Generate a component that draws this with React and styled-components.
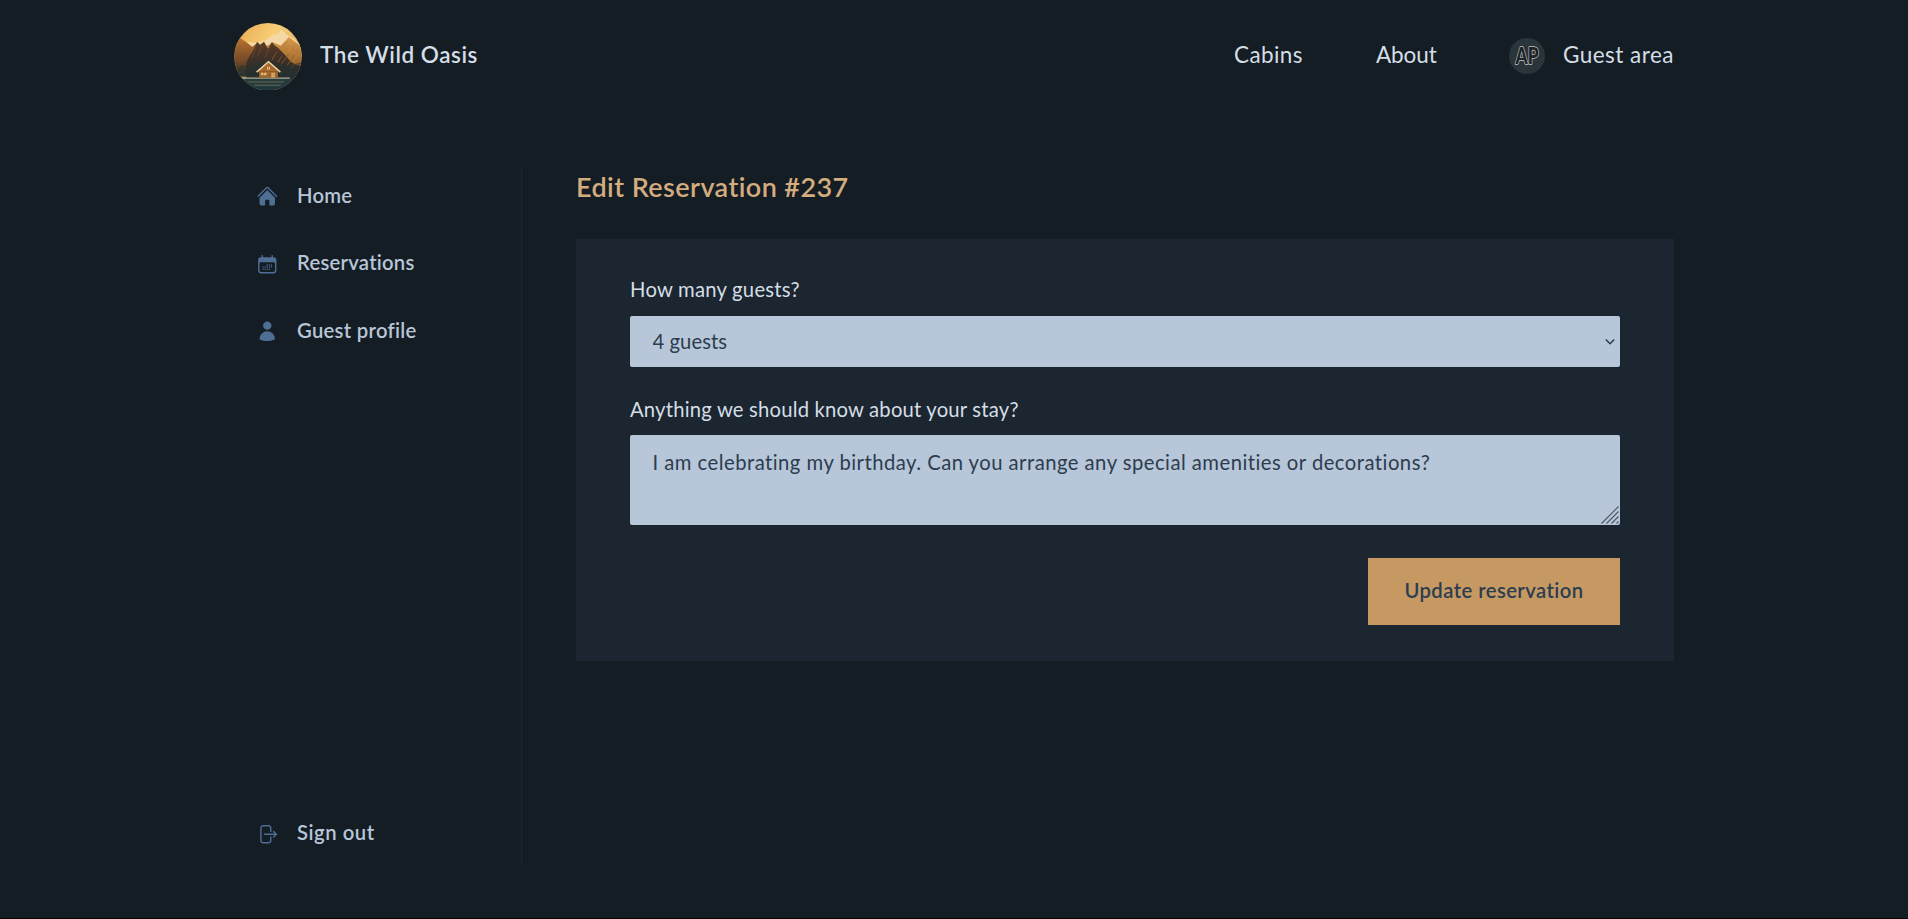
import React from "react";
import styled, { createGlobalStyle } from "styled-components";
import { HiHome, HiCalendarDays, HiUser } from "react-icons/hi2";

const Global = createGlobalStyle`
  *, *::before, *::after { box-sizing: border-box; }
  body {
    margin: 0;
    background: #151d24;
    color: #d4dee7;
    font-family: Lato, "Liberation Sans", sans-serif;
    font-variant-ligatures: none;
    -webkit-font-smoothing: antialiased;
  }
`;

const Page = styled.div`
  height: 919px;
  display: flex;
  flex-direction: column;
  background: #151d24;
  border-bottom: 1px solid #020304;
  overflow: hidden;
`;

const Header = styled.header`
  width: 1440px;
  height: 112.5px;
  margin: 0 auto;
  display: flex;
  align-items: center;
  justify-content: space-between;
`;

const Text = styled.span`
  white-space: nowrap;
  line-height: ${(p) => p.$line || 31.5}px;
  letter-spacing: ${(p) => p.$track || 0}px;
  padding-bottom: ${(p) => p.$lift || 0}px;
`;

const Brand = styled.a`
  display: flex;
  align-items: center;
  gap: 18px;
  font-size: 22.5px;
  font-weight: 600;
`;

const TopNav = styled.nav`
  display: flex;
  align-items: center;
  gap: 72px;
  font-size: 22.5px;
`;

const TopLink = styled.a`
  display: flex;
  align-items: center;
  justify-content: flex-start;
  gap: 18px;
  width: ${(p) => p.$w}px;
`;

const Main = styled.main`
  width: 1440px;
  margin: 0 auto;
  padding: 54px 0;
  flex: 1;
  display: grid;
  grid-template-columns: 288px 1fr;
  gap: 54px;
`;

const SideNav = styled.nav`
  border-right: 1px solid #1b2631;
  display: flex;
  flex-direction: column;
  justify-content: space-between;
`;

const SideList = styled.div`
  display: flex;
  flex-direction: column;
  gap: 9px;
`;

const SideLink = styled.a`
  height: 58.5px;
  padding: 0 22px;
  margin-bottom: ${(p) => (p.$last ? 1 : 0)}px;
  display: flex;
  align-items: center;
  gap: 18.5px;
  font-size: 20.25px;
  font-weight: 600;
  color: #b7c6d8;
  svg { width: 22.5px; height: 22.5px; color: #4e6e93; flex: none; margin-top: 1px; }
`;

const Content = styled.section`
  display: flex;
  flex-direction: column;
`;

const Title = styled.h2`
  margin: 4.5px 0 31.5px;
  height: 36px;
  display: flex;
  font-size: 27px;
  font-weight: 600;
  color: #d3ac80;
`;

const Form = styled.form`
  background: #1c2630;
  height: 422.4px;
  padding: 37px 54px 36px;
  display: flex;
  flex-direction: column;
  gap: 27.5px;
  font-size: 20.25px;
`;

const Field = styled.div`
  display: flex;
  flex-direction: column;
  gap: 9px;
`;

const Label = styled.label`
  height: 31.5px;
  display: flex;
`;

const Control = styled.div`
  display: grid;
  position: relative;
`;

const inputStyle = `
  appearance: none;
  width: 100%;
  margin: 0;
  border: 0;
  border-radius: 2px;
  background: #b7c6d8;
  color: #2c3d4f;
  font-family: inherit;
  font-size: 20.25px;
  box-shadow: 0 1px 2px rgba(0, 0, 0, 0.05);
  outline: none;
`;

const Select = styled.select`
  ${inputStyle}
  height: 51px;
  padding: 0 22.5px 2px;
  letter-spacing: 0.05px;
`;

const TextArea = styled.textarea`
  ${inputStyle}
  height: 90px;
  padding: 12px 22.5px;
  line-height: 31.5px;
  letter-spacing: 0.47px;
  resize: none;
  overflow: hidden;
`;

const Chevron = styled.svg`
  position: absolute;
  right: 5px;
  top: 22px;
  pointer-events: none;
`;

const Grip = styled.svg`
  position: absolute;
  right: 1px;
  bottom: 1px;
  pointer-events: none;
`;

const Actions = styled.div`
  display: flex;
  justify-content: flex-end;
  margin-top: 5.5px;
`;

const Button = styled.button`
  width: 252px;
  height: 67px;
  border: 0;
  padding: 0;
  display: flex;
  align-items: center;
  justify-content: center;
  background: #c69963;
  color: #2c3d4f;
  font: 600 20.25px Lato, "Liberation Sans", sans-serif;
`;

function Logo() {
  return (
    <svg width="68" height="67.5" viewBox="0 0 68 68">
      <defs>
        <clipPath id="disc"><circle cx="34" cy="34" r="34" /></clipPath>
        <linearGradient id="sky" x1="0" y1="0" x2="1" y2="0.6">
          <stop offset="0" stopColor="#e5a44b" />
          <stop offset="0.5" stopColor="#f8cf78" />
          <stop offset="1" stopColor="#e0a65a" />
        </linearGradient>
        <linearGradient id="back" x1="0" y1="0" x2="0" y2="1">
          <stop offset="0" stopColor="#d99b4c" />
          <stop offset="1" stopColor="#80501f" />
        </linearGradient>
        <linearGradient id="left" x1="0" y1="0" x2="0" y2="1">
          <stop offset="0" stopColor="#b9712f" />
          <stop offset="0.65" stopColor="#6b4628" />
          <stop offset="1" stopColor="#2c3430" />
        </linearGradient>
        <linearGradient id="front" x1="0" y1="0" x2="0" y2="1">
          <stop offset="0" stopColor="#5b3b24" />
          <stop offset="0.5" stopColor="#3a302a" />
          <stop offset="1" stopColor="#202e30" />
        </linearGradient>
        <linearGradient id="lake" x1="0" y1="0" x2="0" y2="1">
          <stop offset="0" stopColor="#263c3d" />
          <stop offset="1" stopColor="#20383f" />
        </linearGradient>
      </defs>
      <g clipPath="url(#disc)">
        <rect width="68" height="68" fill="url(#sky)" />
        <path d="M8 19L20 20L31 18L39 12L44 11L47 6L52 11L60 16L68 23V34H8Z" fill="#f5d8a5" />
        <path d="M30 24L40 20L47 23L55 14L68 24V56H30Z" fill="url(#back)" />
        <path d="M42 27L55 17L48 28L57 22L49 35ZM61 20L54 34L66 24L60 38Z" fill="#b97a36" opacity=".55" />
        <path d="M0 22L6 15L13 20L18 24L22 21L29 25V54H0Z" fill="url(#left)" />
        <path d="M12 40L15 34L19 28L23 19L26 22L30 19L34 26L38 19L41 23L44 25L51 32L57 39L62 42L68 44V58H12Z" fill="url(#front)" />
        <path d="M22 25L18 35M28 23L23 34M36 24L31 35M7 39L13 31" stroke="#85552d" strokeWidth="1" fill="none" opacity=".5" />
        <path d="M43 29L38 37M55 31L47 42M61 32L53 43M66 35L57 46M48 33L44 40" stroke="#8f5c2d" strokeWidth="1.1" opacity=".65" />
        <path d="M0 47L8 42L18 45L28 39L46 40L56 43L68 39V68H0Z" fill="#25302e" opacity=".5" />
        <rect y="56" width="68" height="12" fill="url(#lake)" />
        <path d="M8 55.5H56" stroke="#b5aa96" strokeWidth="1.4" />
        <path d="M14 59.4H50M20 62.7H47" stroke="#7e7259" strokeWidth=".8" />
        <path d="M25 47L34.5 39.5L44 47V55H25Z" fill="#a5672b" />
        <path d="M26 49H43M26 52.5H43" stroke="#7d4c22" strokeWidth=".5" />
        <path d="M22.5 49.5L34.5 39L46.5 49.5" stroke="#e8d2a6" strokeWidth="1.5" fill="none" />
        <path d="M33 44H36V47H33ZM27 50H32.5V52.6H27ZM37.5 50H40.8V55H37.5Z" fill="#e6c07c" />
        <path d="M34.5 44V47M29.7 50V53M39.2 50V55" stroke="#794a20" strokeWidth=".5" />
      </g>
    </svg>
  );
}

function Avatar() {
  return (
    <svg width="36" height="36" viewBox="0 0 36 36" overflow="visible">
      <circle cx="18" cy="18" r="18" fill="#29353b" />
      <text x="6.5" y="26.3" fontFamily="Lato, sans-serif" fontWeight="900" fontSize="23.5" textLength="23" lengthAdjust="spacingAndGlyphs" fill="#1b2328" stroke="#c9c5c0" strokeWidth="1.5" strokeLinejoin="round" paintOrder="stroke">AP</text>
    </svg>
  );
}

const SignOutIcon = () => (
  <svg viewBox="0 0 24 24" fill="none" stroke="currentColor" strokeWidth="1.5" strokeLinecap="round" strokeLinejoin="round">
    <path d="M15.75 9V5.25A2.25 2.25 0 0013.5 3h-6a2.25 2.25 0 00-2.25 2.25v13.5A2.25 2.25 0 007.5 21h6a2.25 2.25 0 002.25-2.25V15m3 0l3-3m0 0l-3-3m3 3H9" />
  </svg>
);

export default function App() {
  return (
    <Page>
      <Global />
      <Header>
        <Brand><Logo /><Text $track={0.55} $lift={3}>The Wild Oasis</Text></Brand>
        <TopNav>
          <TopLink $w={70}><Text $track={0.4} $lift={3}>Cabins</Text></TopLink>
          <TopLink $w={61}><Text $track={-0.1} $lift={3}>About</Text></TopLink>
          <TopLink $w={165}><Avatar /><Text $track={0.48} $lift={3}>Guest area</Text></TopLink>
        </TopNav>
      </Header>
      <Main>
        <SideNav>
          <SideList>
            <SideLink><HiHome /><Text $track={0.25} $lift={1}>Home</Text></SideLink>
            <SideLink><HiCalendarDays /><Text $track={0.25} $lift={1}>Reservations</Text></SideLink>
            <SideLink><HiUser /><Text $track={0.3} $lift={1}>Guest profile</Text></SideLink>
          </SideList>
          <SideLink $last><SignOutIcon /><Text $track={0.55} $lift={1.5}>Sign out</Text></SideLink>
        </SideNav>
        <Content>
          <Title><Text $line={32} $track={0.42}>Edit Reservation #237</Text></Title>
          <Form>
            <Field>
              <Label htmlFor="guests"><Text $line={27} $track={0.23}>How many guests?</Text></Label>
              <Control>
                <Select id="guests" defaultValue="4"><option value="4">4 guests</option></Select>
                <Chevron width="10" height="8" viewBox="0 0 10 8" fill="none" stroke="#2c3d4f" strokeWidth="1.5">
                  <path d="M.8 1.5L5 5.8L9.2 1.5" />
                </Chevron>
              </Control>
            </Field>
            <Field>
              <Label htmlFor="notes"><Text $line={28} $track={0.19}>Anything we should know about your stay?</Text></Label>
              <Control>
                <TextArea id="notes" spellCheck={false} defaultValue="I am celebrating my birthday. Can you arrange any special amenities or decorations?" />
                <Grip width="18" height="18" viewBox="0 0 18 18" stroke="#4d5660" strokeWidth="1.1">
                  <path d="M.5 17.5L17.5 .5M5.5 17.5L17.5 5.5M10.5 17.5L17.5 10.5M15.5 17.5L17.5 15.5" />
                </Grip>
              </Control>
            </Field>
            <Actions><Button type="button"><Text $track={0.44} $lift={2}>Update reservation</Text></Button></Actions>
          </Form>
        </Content>
      </Main>
    </Page>
  );
}
